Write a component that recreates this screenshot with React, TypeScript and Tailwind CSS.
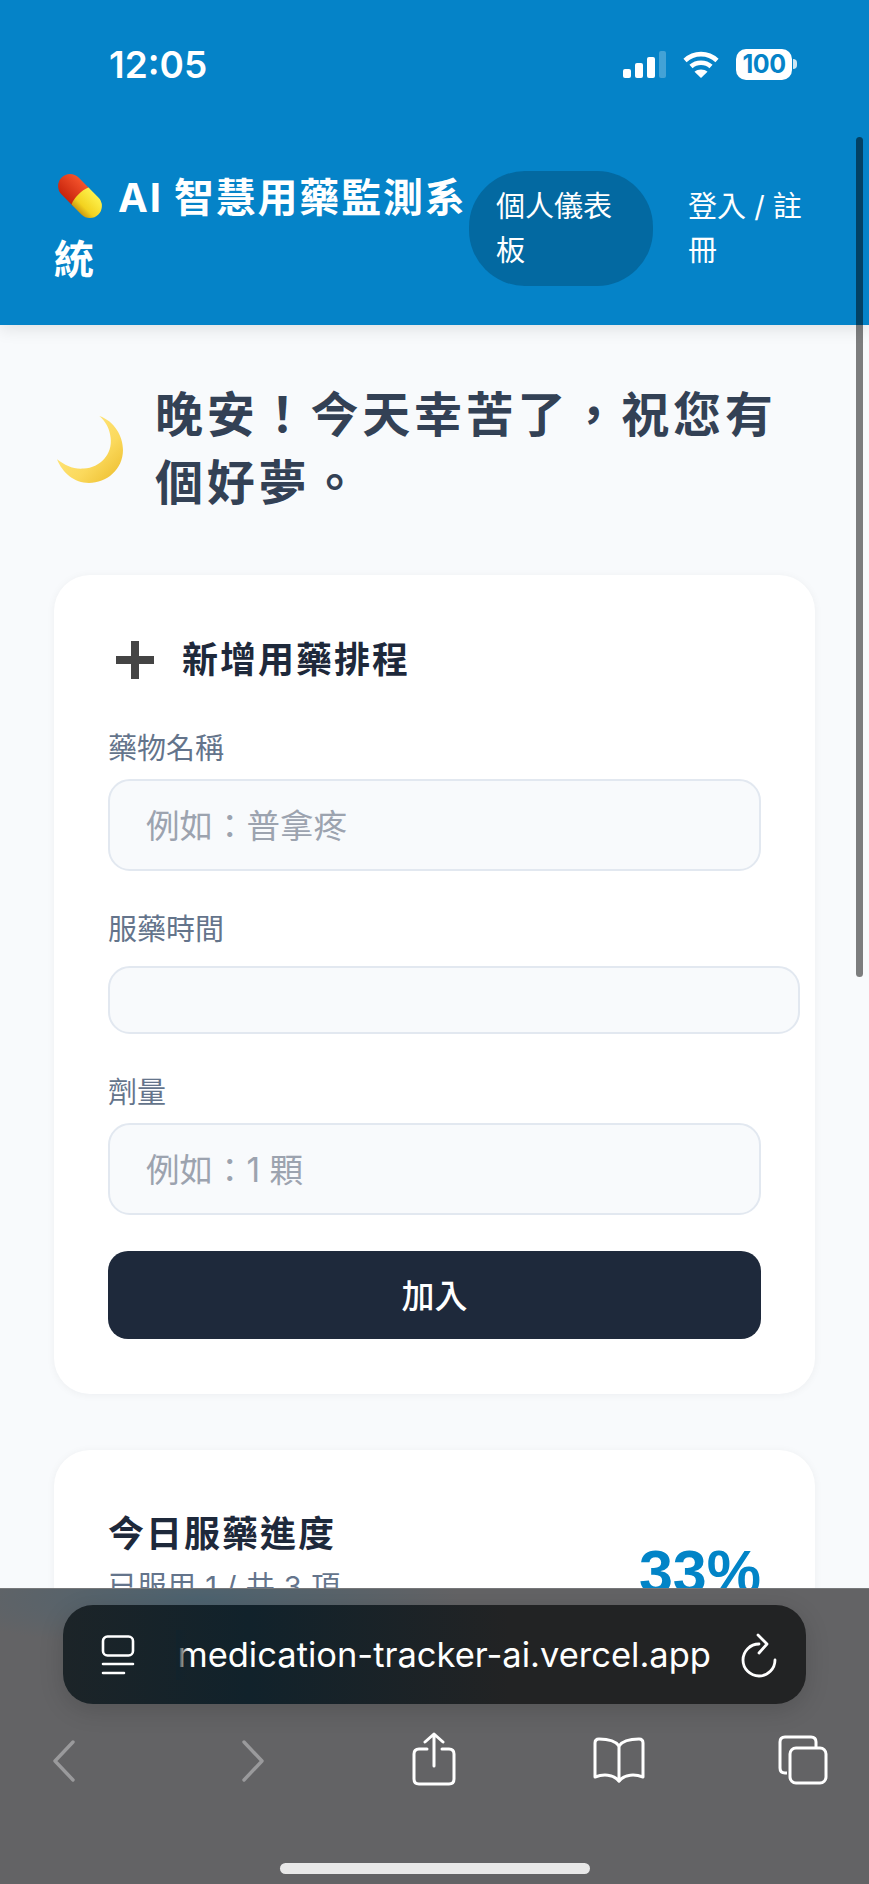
const cjk = "font-['Inter','Noto_Sans_CJK_TC',sans-serif]";

const PillEmoji = () => (
  <svg viewBox="0 0 44 44" className="inline-block w-[44px] h-[44px] ml-[4px] mr-[16px] align-[-6px] overflow-visible">
    <defs>
      <linearGradient id="pillRed" x1="0" y1="0" x2="0" y2="1">
        <stop offset="0" stopColor="#f4532c" />
        <stop offset="1" stopColor="#c8240c" />
      </linearGradient>
      <linearGradient id="pillYellow" x1="0" y1="0" x2="0" y2="1">
        <stop offset="0" stopColor="#fdf14c" />
        <stop offset="0.7" stopColor="#f3d21f" />
        <stop offset="1" stopColor="#cf9a10" />
      </linearGradient>
    </defs>
    <g transform="rotate(45 22 22)">
      <path d="M24 10 H8 A12 12 0 0 0 8 34 H24 Z" fill="url(#pillRed)" />
      <path d="M22 10 H36 A12 12 0 0 1 36 34 H22 C19 27 19 17 22 10 Z" fill="url(#pillYellow)" />
    </g>
  </svg>
);

const MoonEmoji = () => (
  <svg viewBox="0 0 64 65" className="w-[66px] h-[67px] ml-[3px] shrink-0">
    <defs>
      <linearGradient id="moon" x1="0.2" y1="0.2" x2="0.9" y2="0.9">
        <stop offset="0" stopColor="#ffe680" />
        <stop offset="0.6" stopColor="#fbd95c" />
        <stop offset="1" stopColor="#efc235" />
      </linearGradient>
    </defs>
    <path
      d="M41 0 C56 5 64 20 64 33 C64 52 48 65 31 65 C17 65 5 55 0 42 C8 48 16 52 26 51 C42 50 54 37 52 21 C51 12 47 5 41 0 Z"
      fill="url(#moon)"
    />
  </svg>
);

const StatusIcons = () => (
  <div className="flex items-center">
    <div className="flex items-end gap-[4px] h-[27px]">
      <div className="w-[8px] h-[9px] rounded-[2px] bg-white" />
      <div className="w-[8px] h-[15px] rounded-[2px] bg-white" />
      <div className="w-[8px] h-[21px] rounded-[2px] bg-white" />
      <div className="w-[7px] h-[27px] rounded-[2px] bg-white/25" />
    </div>
    <svg viewBox="0 0 36 27" className="w-[36px] h-[27px] ml-[17px]" fill="none" stroke="#fff" strokeWidth="4.6">
      <path d="M2 9.5 C11 1 25 1 34 9.5" />
      <path d="M8 15.5 C13.5 10.5 22.5 10.5 28 15.5" />
      <path d="M18 27 L11.5 20.8 C15 17.6 21 17.6 24.5 20.8 Z" fill="#fff" stroke="none" />
    </svg>
    <div className="flex items-center ml-[17px]">
      <div className="w-[56px] h-[31px] rounded-[10px] bg-white flex items-center justify-center text-[25px] font-bold leading-none tracking-[-0.5px] text-[#0583c8] font-['Inter',sans-serif]">
        100
      </div>
      <div className="w-[4px] h-[10px] ml-[1px] rounded-r-full bg-white/80" />
    </div>
  </div>
);

const Label = ({ children, className }: { children: string; className: string }) => (
  <div className={`text-[29px] leading-[40px] text-[#64748b] ${className}`}>{children}</div>
);

const inputClass =
  "block h-[92px] w-[653px] rounded-[22px] border-2 border-[#e2e8f0] bg-[#f8fafc] px-[36px] pt-[2px] text-[33.5px] outline-none placeholder:text-[#9ca3af]";

const ToolbarIcons = () => (
  <div className="relative h-[60px] mt-[28px]">
    <svg viewBox="0 0 24 42" className="absolute left-[52px] top-[8px] w-[24px] h-[42px]" fill="none" stroke="#9a9a9c" strokeWidth="3.4" strokeLinecap="round" strokeLinejoin="round">
      <path d="M21 2 L3 21 L21 40" />
    </svg>
    <svg viewBox="0 0 24 42" className="absolute left-[241px] top-[8px] w-[24px] h-[42px]" fill="none" stroke="#9a9a9c" strokeWidth="3.4" strokeLinecap="round" strokeLinejoin="round">
      <path d="M3 2 L21 21 L3 40" />
    </svg>
    <svg viewBox="0 0 44 54" className="absolute left-[412px] top-[0px] w-[44px] h-[54px]" fill="none" stroke="#fff" strokeWidth="3" strokeLinecap="round" strokeLinejoin="round">
      <path d="M15 17 H7 Q2 17 2 22 V47 Q2 52 7 52 H37 Q42 52 42 47 V22 Q42 17 37 17 H30" />
      <path d="M22 34 V2 M13 10 L22 2 L31 10" />
    </svg>
    <svg viewBox="0 0 56 46" className="absolute left-[591px] top-[5px] w-[56px] h-[46px]" fill="none" stroke="#fff" strokeWidth="3" strokeLinejoin="round" strokeLinecap="round">
      <path d="M28 9 C24 3 16 2 8 2 Q4 2 4 6 V40 C12 37 22 37 28 44 C34 37 44 37 52 40 V6 Q52 2 48 2 C40 2 32 3 28 9 Z" />
      <path d="M28 9 V44" />
    </svg>
    <svg viewBox="0 0 50 50" className="absolute left-[778px] top-[3px] w-[50px] h-[50px]" fill="none" stroke="#fff" strokeWidth="3">
      <path d="M9 38 H7 Q2 38 2 33 V7 Q2 2 7 2 H33 Q38 2 38 7 V13" />
      <rect x="12" y="13" width="36" height="35" rx="6" />
    </svg>
  </div>
);

const SafariBar = () => (
  <div className="absolute left-0 right-0 bottom-0 h-[296px] bg-[radial-gradient(ellipse_260px_50px_at_200px_10px,#4d6370,#636365)] border-t border-[#77787a] font-['Inter',sans-serif]">
    <div className="mx-[63px] mt-[16px] h-[99px] rounded-[30px] bg-[linear-gradient(90deg,#1c2428,#11222b_25%,#222324_60%)] shadow-[0_6px_24px_rgba(0,0,0,0.15)] flex items-center">
      <svg viewBox="0 0 34 40" className="w-[34px] h-[40px] ml-[38px] shrink-0" fill="none" stroke="#fff" strokeWidth="2.6" strokeLinecap="round">
        <rect x="2" y="1.5" width="30" height="19" rx="4.5" />
        <path d="M2 29 H32 M2 38 H23" />
      </svg>
      <div className="relative ml-[41px] h-[50px] w-[535px] overflow-hidden whitespace-nowrap text-white text-[34.5px] leading-[50px]">
        <span className="absolute right-0 top-0">medication-tracker-ai.vercel.app</span>
        <div className="absolute left-0 top-0 bottom-0 w-[12px] bg-[linear-gradient(90deg,#12232c_10%,transparent)]" />
      </div>
      <svg viewBox="0 0 40 46" className="w-[40px] h-[46px] ml-[28px] shrink-0" fill="none" stroke="#fff" strokeWidth="2.8" strokeLinecap="round" strokeLinejoin="round">
        <path d="M36 28 A16 16 0 1 1 20 12" />
        <path d="M19 3 L28 12 L20 21" />
      </svg>
    </div>
    <ToolbarIcons />
    <div className="mx-auto mt-[71px] h-[11px] w-[310px] rounded-full bg-[#e8e8e8]" />
  </div>
);

export default function App() {
  return (
    <div className={`relative h-[1884px] w-[869px] overflow-hidden bg-[#f8fafc] ${cjk}`}>
      <header className="h-[325px] bg-[#0583c8] pt-[40px] shadow-[0_4px_16px_rgba(0,0,0,0.1)] text-white relative">
        <div className="flex items-center justify-between h-[48px] pl-[109px] pr-[72px]">
          <span className="text-[37px] font-semibold leading-none">12:05</span>
          <StatusIcons />
        </div>
        <nav className="flex items-center h-[115px] mt-[83px] pl-[54px]">
          <h1 className="w-[415px] shrink-0 text-[40px] font-bold leading-[62px] tracking-[1.8px]">
            <PillEmoji />
            AI 智慧用藥監測系統
          </h1>
          <a className="w-[184px] shrink-0 rounded-[56px] bg-[#0369a1] px-[27px] py-[14px] text-[29px] leading-[43.5px]">
            個人儀表板
          </a>
          <a className="ml-[35px] w-[130px] shrink-0 text-[29px] leading-[43.5px]">登入 / 註冊</a>
        </nav>
      </header>

      <main className="px-[54px] pt-[56px]">
        <div className="flex items-center">
          <MoonEmoji />
          <h2 className="ml-[32px] w-[630px] text-[48px] font-bold leading-[68px] tracking-[3.8px] text-[#334155]">
            晚安！今天幸苦了，祝您有個好夢。
          </h2>
        </div>

        <section className="mt-[58px] rounded-[36px] bg-white px-[54px] pt-[60px] pb-[55px] shadow-[0_1px_8px_rgba(15,23,42,0.05)]">
          <div className="flex items-center h-[50px]">
            <svg viewBox="0 0 38 38" className="ml-[8px] w-[38px] h-[38px]" fill="#444">
              <path d="M15 0 H23 V15 H38 V23 H23 V38 H15 V23 H0 V15 H15 Z" />
            </svg>
            <h3 className="ml-[28px] text-[36px] font-bold tracking-[2px] text-[#1e293b]">新增用藥排程</h3>
          </div>
          <Label className="mt-[44px] mb-[10px]">藥物名稱</Label>
          <input className={inputClass} placeholder="例如：普拿疼" />
          <Label className="mt-[39px] mb-[16px]">服藥時間</Label>
          <input className="block h-[68px] w-[692px] rounded-[22px] border-2 border-[#e2e8f0] bg-[#f8fafc] outline-none" />
          <Label className="mt-[39px] mb-[10px]">劑量</Label>
          <input className={inputClass} placeholder="例如：1 顆" />
          <button className="mt-[36px] h-[88px] w-[653px] rounded-[20px] bg-[#1e293b] pt-[4px] text-[33px] font-medium text-white">
            加入
          </button>
        </section>

        <section className="mt-[56px] rounded-[36px] bg-white px-[54px] pt-[59px] pb-[55px] shadow-[0_1px_8px_rgba(15,23,42,0.05)]">
          <div className="flex items-start justify-between">
            <div>
              <h3 className="text-[36px] font-bold leading-[50px] tracking-[2px] text-[#1e293b]">今日服藥進度</h3>
              <p className="mt-[8px] text-[29px] leading-[40px] tracking-[0.5px] text-[#64748b]">已服用 1 / 共 3 項</p>
            </div>
            <div className="mt-[33px] text-[61px] font-bold leading-none font-['Liberation_Sans',sans-serif] text-[#0284c7]">
              33%
            </div>
          </div>
        </section>
      </main>

      <div className="absolute right-[6px] top-[137px] h-[840px] w-[7px] rounded-full bg-black/50" />
      <SafariBar />
    </div>
  );
}
